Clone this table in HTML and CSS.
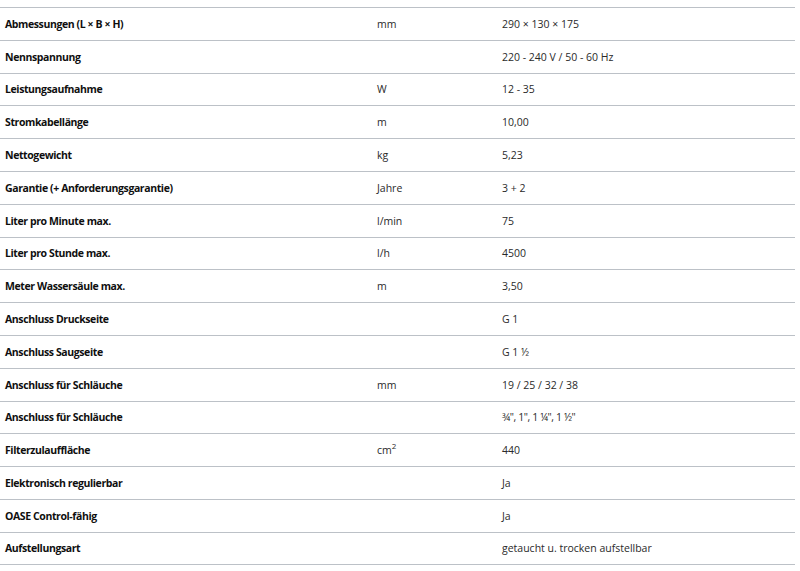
FILE: index.html
```html
<!DOCTYPE html>
<html lang="de">
<head>
<meta charset="utf-8">
<title>Technische Daten</title>
<link rel="stylesheet" href="styles.css">
</head>
<body>
<div class="specs">
  <div class="row"><div class="label">Abmessungen (L × B × H)</div><div class="unit">mm</div><div class="value">290 × 130 × 175</div></div>
  <div class="row"><div class="label">Nennspannung</div><div class="unit"></div><div class="value">220 - 240 V / 50 - 60 Hz</div></div>
  <div class="row"><div class="label">Leistungsaufnahme</div><div class="unit">W</div><div class="value">12 - 35</div></div>
  <div class="row"><div class="label">Stromkabellänge</div><div class="unit">m</div><div class="value">10,00</div></div>
  <div class="row"><div class="label">Nettogewicht</div><div class="unit">kg</div><div class="value">5,23</div></div>
  <div class="row"><div class="label">Garantie (+ Anforderungsgarantie)</div><div class="unit">Jahre</div><div class="value">3 + 2</div></div>
  <div class="row"><div class="label">Liter pro Minute max.</div><div class="unit">l/min</div><div class="value">75</div></div>
  <div class="row"><div class="label">Liter pro Stunde max.</div><div class="unit">l/h</div><div class="value">4500</div></div>
  <div class="row"><div class="label">Meter Wassersäule max.</div><div class="unit">m</div><div class="value">3,50</div></div>
  <div class="row"><div class="label">Anschluss Druckseite</div><div class="unit"></div><div class="value">G 1</div></div>
  <div class="row"><div class="label">Anschluss Saugseite</div><div class="unit"></div><div class="value">G 1 ½</div></div>
  <div class="row"><div class="label">Anschluss für Schläuche</div><div class="unit">mm</div><div class="value">19 / 25 / 32 / 38</div></div>
  <div class="row"><div class="label">Anschluss für Schläuche</div><div class="unit"></div><div class="value fractions">¾", 1", 1 ¼", 1 ½"</div></div>
  <div class="row"><div class="label">Filterzulauffläche</div><div class="unit">cm<sup>2</sup></div><div class="value">440</div></div>
  <div class="row"><div class="label">Elektronisch regulierbar</div><div class="unit"></div><div class="value">Ja</div></div>
  <div class="row"><div class="label">OASE Control-fähig</div><div class="unit"></div><div class="value">Ja</div></div>
  <div class="row"><div class="label">Aufstellungsart</div><div class="unit"></div><div class="value">getaucht u. trocken aufstellbar</div></div>
</div>
</body>
</html>
```
FILE: styles.css
```css
html, body {
  margin: 0;
  padding: 0;
  background: #ffffff;
}
body {
  font-family: "Open Sans", "Liberation Sans", sans-serif;
  font-size: 10.5px;
  color: #1c1c1c;
}
.specs {
  width: 795px;
  padding-top: 7px;
}
.row {
  display: grid;
  grid-template-columns: 372px 125px 1fr;
  align-items: center;
  height: 32.8px;
  box-sizing: border-box;
  border-top: 1.5px solid #bcc1c7;
}
.row:last-child {
  border-bottom: 1.5px solid #bcc1c7;
}
.label {
  padding-left: 5px;
  font-weight: 700;
  color: #0f0f0f;
  letter-spacing: -0.4px;
}
.unit, .value {
  padding-left: 5px;
  color: #2a2a2a;
}
.fractions {
  letter-spacing: -0.4px;
}
sup {
  font-size: 8px;
  vertical-align: top;
  position: relative;
  top: -3px;
}
```
